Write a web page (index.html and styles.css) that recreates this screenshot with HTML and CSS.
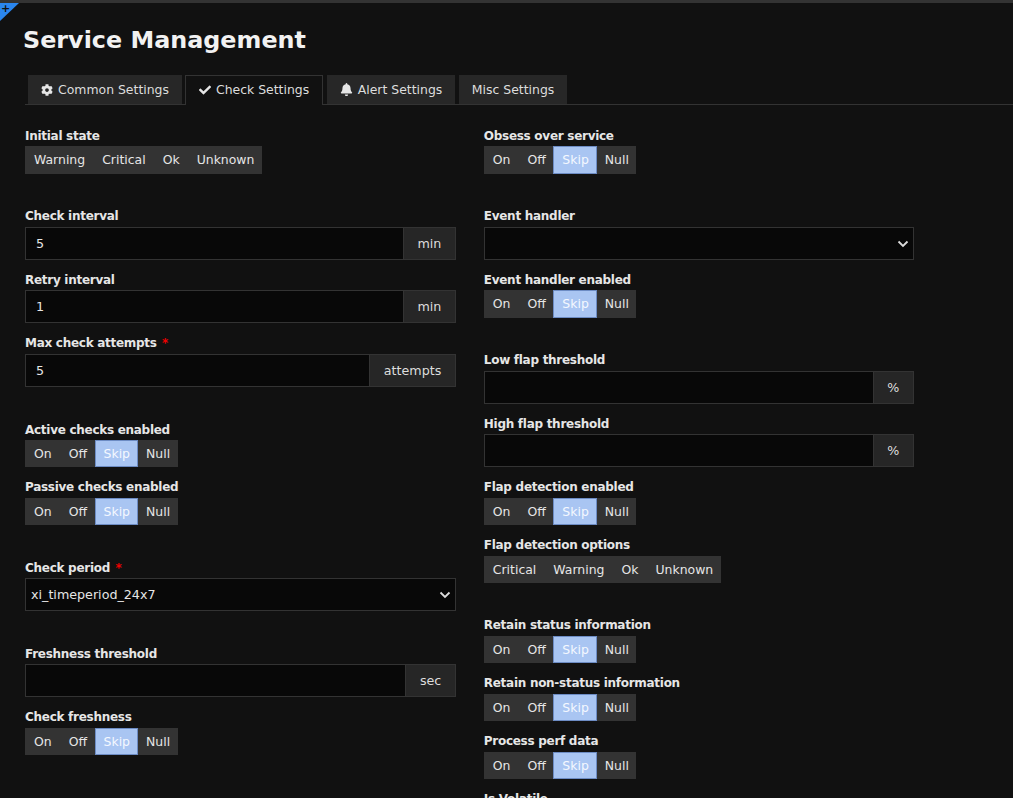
FILE: index.html
```html
<!DOCTYPE html>
<html>
<head>
  <meta charset="UTF-8">
  <title>Service Management</title>
  <link rel="stylesheet" href="styles.css">
</head>
<body>

  <div class="corner"><span class="corner-plus">+</span></div>

  <h1>Service Management</h1>

  <div class="tabs">
    <a class="tab">
      <svg class="tab-icon" viewBox="0 0 512 512"><path d="M487.4 315.7l-42.6-24.6c4.3-23.2 4.3-47 0-70.2l42.6-24.6c4.9-2.8 7.1-8.6 5.5-14-11.1-35.6-30-67.8-54.7-94.6-3.8-4.1-10-5.1-14.8-2.3L380.8 110c-17.9-15.4-38.5-27.3-60.8-35.1V25.8c0-5.6-3.9-10.5-9.4-11.7-36.7-8.2-74.3-7.8-109.2 0-5.5 1.2-9.4 6.1-9.4 11.7V75c-22.2 7.9-42.8 19.8-60.8 35.1L88.7 85.5c-4.9-2.8-11-1.9-14.8 2.3-24.7 26.7-43.6 58.9-54.7 94.6-1.7 5.4.6 11.2 5.5 14L67.3 221c-4.3 23.2-4.3 47 0 70.2l-42.6 24.6c-4.9 2.8-7.1 8.6-5.5 14 11.1 35.6 30 67.8 54.7 94.6 3.8 4.1 10 5.1 14.8 2.3l42.6-24.6c17.9 15.4 38.5 27.3 60.8 35.1v49.2c0 5.6 3.9 10.5 9.4 11.7 36.7 8.2 74.3 7.8 109.2 0 5.5-1.2 9.4-6.1 9.4-11.7v-49.2c22.2-7.9 42.8-19.8 60.8-35.1l42.6 24.6c4.9 2.8 11 1.9 14.8-2.3 24.7-26.7 43.6-58.9 54.7-94.6 1.5-5.5-.7-11.3-5.6-14.1zM256 336c-44.1 0-80-35.9-80-80s35.9-80 80-80 80 35.9 80 80-35.9 80-80 80z"/></svg>
      Common Settings
    </a>
    <a class="tab active">
      <svg class="tab-icon" viewBox="0 0 512 512"><path d="M173.898 439.404l-166.4-166.4c-9.997-9.997-9.997-26.206 0-36.204l36.203-36.204c9.997-9.998 26.207-9.998 36.204 0L192 312.69 432.095 72.596c9.997-9.997 26.207-9.997 36.204 0l36.203 36.204c9.997 9.997 9.997 26.206 0 36.204l-294.4 294.401c-9.998 9.997-26.207 9.997-36.204-.001z"/></svg>
      Check Settings
    </a>
    <a class="tab">
      <svg class="tab-icon bell" viewBox="0 0 448 512"><path d="M224 512c35.32 0 63.97-28.65 63.97-64H160.03c0 35.35 28.65 64 63.97 64zm215.39-149.71c-19.32-20.76-55.47-51.99-55.47-154.29 0-77.7-54.48-139.9-127.94-155.16V32c0-17.67-14.32-32-31.98-32s-31.98 14.33-31.98 32v20.84C118.56 68.1 64.08 130.3 64.08 208c0 102.3-36.15 133.53-55.47 154.29-6 6.45-8.66 14.16-8.61 21.71.11 16.4 12.98 32 32.1 32h383.8c19.12 0 32-15.6 32.1-32 .05-7.55-2.61-15.27-8.61-21.71z"/></svg>
      Alert Settings
    </a>
    <a class="tab">Misc Settings</a>
  </div>

  <div class="columns">
    <div class="col">
      <div class="field spaced">
        <label>Initial state</label>
        <div class="btn-group">
          <button>Warning</button><button>Critical</button><button>Ok</button><button>Unknown</button>
        </div>
      </div>

      <div class="field">
        <label>Check interval</label>
        <div class="input-group">
          <input type="text" value="5"><span class="addon">min</span>
        </div>
      </div>
      <div class="field">
        <label>Retry interval</label>
        <div class="input-group">
          <input type="text" value="1"><span class="addon">min</span>
        </div>
      </div>
      <div class="field spaced">
        <label>Max check attempts <span class="req">*</span></label>
        <div class="input-group">
          <input type="text" value="5"><span class="addon">attempts</span>
        </div>
      </div>

      <div class="field">
        <label>Active checks enabled</label>
        <div class="btn-group">
          <button>On</button><button>Off</button><button class="on">Skip</button><button>Null</button>
        </div>
      </div>
      <div class="field spaced">
        <label>Passive checks enabled</label>
        <div class="btn-group">
          <button>On</button><button>Off</button><button class="on">Skip</button><button>Null</button>
        </div>
      </div>

      <div class="field spaced">
        <label>Check period <span class="req">*</span></label>
        <div class="select-wrap">
          <select><option>xi_timeperiod_24x7</option></select>
          <svg class="chevron" viewBox="0 0 12 8"><path d="M1.5 1.5 6 6l4.5-4.5"/></svg>
        </div>
      </div>

      <div class="field">
        <label>Freshness threshold</label>
        <div class="input-group">
          <input type="text"><span class="addon">sec</span>
        </div>
      </div>
      <div class="field">
        <label>Check freshness</label>
        <div class="btn-group">
          <button>On</button><button>Off</button><button class="on">Skip</button><button>Null</button>
        </div>
      </div>
    </div>

    <div class="col">
      <div class="field spaced">
        <label>Obsess over service</label>
        <div class="btn-group">
          <button>On</button><button>Off</button><button class="on">Skip</button><button>Null</button>
        </div>
      </div>

      <div class="field">
        <label>Event handler</label>
        <div class="select-wrap">
          <select><option></option></select>
          <svg class="chevron" viewBox="0 0 12 8"><path d="M1.5 1.5 6 6l4.5-4.5"/></svg>
        </div>
      </div>
      <div class="field spaced">
        <label>Event handler enabled</label>
        <div class="btn-group">
          <button>On</button><button>Off</button><button class="on">Skip</button><button>Null</button>
        </div>
      </div>

      <div class="field">
        <label>Low flap threshold</label>
        <div class="input-group">
          <input type="text"><span class="addon">%</span>
        </div>
      </div>
      <div class="field">
        <label>High flap threshold</label>
        <div class="input-group">
          <input type="text"><span class="addon">%</span>
        </div>
      </div>
      <div class="field">
        <label>Flap detection enabled</label>
        <div class="btn-group">
          <button>On</button><button>Off</button><button class="on">Skip</button><button>Null</button>
        </div>
      </div>
      <div class="field spaced">
        <label>Flap detection options</label>
        <div class="btn-group">
          <button>Critical</button><button>Warning</button><button>Ok</button><button>Unknown</button>
        </div>
      </div>

      <div class="field">
        <label>Retain status information</label>
        <div class="btn-group">
          <button>On</button><button>Off</button><button class="on">Skip</button><button>Null</button>
        </div>
      </div>
      <div class="field">
        <label>Retain non-status information</label>
        <div class="btn-group">
          <button>On</button><button>Off</button><button class="on">Skip</button><button>Null</button>
        </div>
      </div>
      <div class="field">
        <label>Process perf data</label>
        <div class="btn-group">
          <button>On</button><button>Off</button><button class="on">Skip</button><button>Null</button>
        </div>
      </div>
      <div class="field">
        <label>Is Volatile</label>
      </div>
    </div>
  </div>

</body>
</html>
```

FILE: styles.css
```css
html, body { height: 100%; overflow: hidden; }
body { margin: 0; background: #111; color: #e6e6e6; font-family: "DejaVu Sans", sans-serif; font-size: 12.7px; border-top: 3px solid #333; box-sizing: border-box; }

.corner { position: absolute; top: 3px; left: 0; width: 0; height: 0; border-top: 18px solid #2a86ee; border-right: 19px solid transparent; }
.corner-plus { position: absolute; top: -19px; left: 1px; color: #111; font-size: 11px; font-weight: bold; line-height: 14px; }

h1 { margin: 0; padding: 19px 0 0 23px; height: 54px; box-sizing: border-box; font-size: 23.85px; line-height: 36px; color: #f2f2f2; }

.tabs { display: flex; height: 30px; margin: 18px 0 0 25px; padding-left: 3px; gap: 3.5px; border-bottom: 1px solid #333; box-sizing: border-box; font-size: 12.45px; }
.tab { display: flex; align-items: center; gap: 5px; height: 29px; padding: 0 13px; background: #272727; color: #ddd; box-sizing: border-box; }
.tab.active { height: 30px; background: #111; border: 1px solid #333; border-bottom: none; padding: 0 13px 2px 12.5px; }
.tab-icon { width: 12px; height: 12px; fill: #e6e6e6; }
.tab-icon.bell { width: 13px; height: 13px; }

.columns { display: grid; grid-template-columns: 431px 430.2px; column-gap: 27.8px; padding: 19.8px 0 0 25px; }

.field { margin-bottom: 9px; }
.field.spaced { margin-bottom: 31.6px; }
.field label { display: block; height: 21.6px; line-height: 23px; font-size: 12px; letter-spacing: -0.28px; font-weight: bold; color: #e6e6e6; }
.req { color: #e00; margin-left: 1.5px; }

.btn-group { display: inline-flex; height: 27.2px; background: #333; vertical-align: top; font-size: 12.45px; }
.btn-group button { padding: 0 7px 0 8px; border: 1px solid #333; background: #333; color: #e6e6e6; font: inherit; height: 100%; }
.btn-group button:has(+ .on) { padding-right: 6.5px; }
.btn-group button.on { background: #a9c5f2; border-color: #6d8cc4; color: #f4f8ff; }
.btn-group button.on + button { padding: 0 6.5px 0 7px; }

.input-group { display: flex; height: 33px; }
.input-group input { flex: 1; min-width: 0; padding: 0 10px; background: #080808; border: 1px solid #333; color: #e6e6e6; font: inherit; outline: none; }
.addon { display: flex; align-items: center; padding: 0 13.7px; background: #262626; border: 1px solid #333; border-left: none; color: #ddd; }

.select-wrap { position: relative; height: 33px; }
.select-wrap select { width: 100%; height: 100%; padding: 0 5px; appearance: none; background: #080808; border: 1px solid #333; color: #e6e6e6; font: inherit; border-radius: 0; outline: none; }
.chevron { position: absolute; top: 13px; right: 5px; width: 12px; height: 8px; fill: none; stroke: #ddd; stroke-width: 1.8; }
```
